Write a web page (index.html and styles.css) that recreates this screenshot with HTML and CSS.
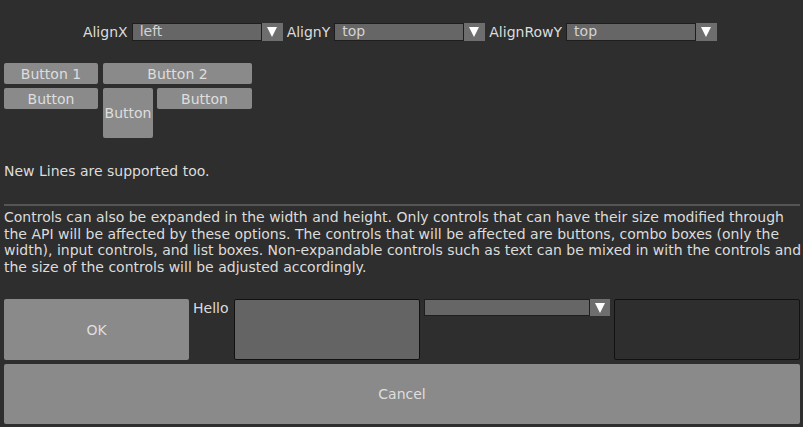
FILE: index.html
```html
<!DOCTYPE html>
<html lang="en">
<head>
  <meta charset="UTF-8" />
  <title>Layout demo</title>
  <link rel="stylesheet" href="styles.css">
</head>
<body>
  <div class="window">
    <div class="align-bar">
      <span class="label">AlignX</span>
      <div class="combo"><span class="combo-value">left</span><span class="combo-arrow"></span></div>
      <span class="label">AlignY</span>
      <div class="combo"><span class="combo-value">top</span><span class="combo-arrow"></span></div>
      <span class="label">AlignRowY</span>
      <div class="combo"><span class="combo-value">top</span><span class="combo-arrow"></span></div>
    </div>

    <div class="button-grid">
      <button class="btn b1">Button 1</button>
      <button class="btn b2">Button 2</button>
      <button class="btn b3">Button</button>
      <button class="btn b4">Button</button>
      <button class="btn b5">Button</button>
    </div>

    <p class="note">New Lines are supported too.</p>

    <hr class="separator">

    <p class="info">Controls can also be expanded in the width and height. Only controls that can have their size modified through<br>the API will be affected by these options. The controls that will be affected are buttons, combo boxes (only the<br>width), input controls, and list boxes. Non-expandable controls such as text can be mixed in with the controls and<br>the size of the controls will be adjusted accordingly.</p>

    <div class="expand-row">
      <button class="btn ok">OK</button>
      <span class="hello">Hello</span>
      <div class="input-box"></div>
      <div class="combo wide"><span class="combo-value"></span><span class="combo-arrow"></span></div>
      <div class="list-box"></div>
    </div>

    <button class="btn cancel">Cancel</button>
  </div>
</body>
</html>
```

FILE: styles.css
```css
* { margin: 0; padding: 0; box-sizing: border-box; }
html, body { height: 100%; }
body {
  background: #2e2e2e;
  font-family: 'DejaVu Sans', sans-serif;
  font-size: 14px;
  color: #dcdcdc;
}

.window {
  height: 100%;
  padding: 0 3px 0 4px;
  display: flex;
  flex-direction: column;
}

/* Alignment combo row */
.align-bar {
  display: flex;
  justify-content: center;
  align-items: center;
  gap: 4px;
  margin-top: 23px;
  height: 18px;
  padding-right: 4px;
}
.label { color: #dcdcdc; }
.combo {
  display: flex;
  height: 18px;
  width: 151px;
}
.combo-value {
  flex: 1;
  background: #666;
  border: 1px solid #1e1e1e;
  padding-left: 7px;
  line-height: 15px;
  color: #d4d4d4;
}
.combo-arrow {
  width: 21px;
  background: #6e6e6e;
  position: relative;
}
.combo-arrow::after {
  content: '';
  position: absolute;
  left: 5px;
  top: 4px;
  border-left: 5px solid transparent;
  border-right: 5px solid transparent;
  border-top: 10px solid #fff;
}

/* Button grid */
.button-grid {
  display: grid;
  grid-template-columns: 95px 50px 95px;
  grid-template-rows: 21px 21px 25px;
  column-gap: 4px;
  row-gap: 4px;
  margin-top: 22px;
}
.btn {
  font-family: inherit;
  font-size: 14px;
  color: #dedede;
  background: #8a8a8a;
  border: none;
  border-radius: 2px;
}
.b1 { grid-column: 1; grid-row: 1; margin-right: 1px; }
.b2 { grid-column: 2 / 4; grid-row: 1; }
.b3 { grid-column: 1; grid-row: 2; margin-right: 1px; }
.b4 { grid-column: 2; grid-row: 2 / 4; }
.b5 { grid-column: 3; grid-row: 2; }

.note { margin-top: 25px; line-height: 16px; }

.separator {
  border: none;
  height: 2px;
  background: #555;
  margin-top: 25px;
}

.info {
  margin-top: 3px;
  line-height: 16.6px;
  white-space: nowrap;
}

/* Expanded controls */
.expand-row {
  display: flex;
  align-items: flex-start;
  gap: 4px;
  margin-top: 24px;
  height: 61px;
}
.ok { width: 185px; height: 61px; }
.hello { line-height: 16px; margin-top: 1px; margin-right: 1px; }
.input-box {
  width: 186px;
  height: 61px;
  background: #646464;
  border: 1px solid #111;
  border-radius: 2px;
}
.combo.wide { width: 186px; height: 17px; }
.combo.wide .combo-arrow { width: 20px; }
.list-box {
  flex: 1;
  height: 61px;
  border: 1px solid #111;
  border-radius: 2px;
}

.cancel {
  height: 60px;
  margin-top: 4px;
  width: 100%;
}
```
